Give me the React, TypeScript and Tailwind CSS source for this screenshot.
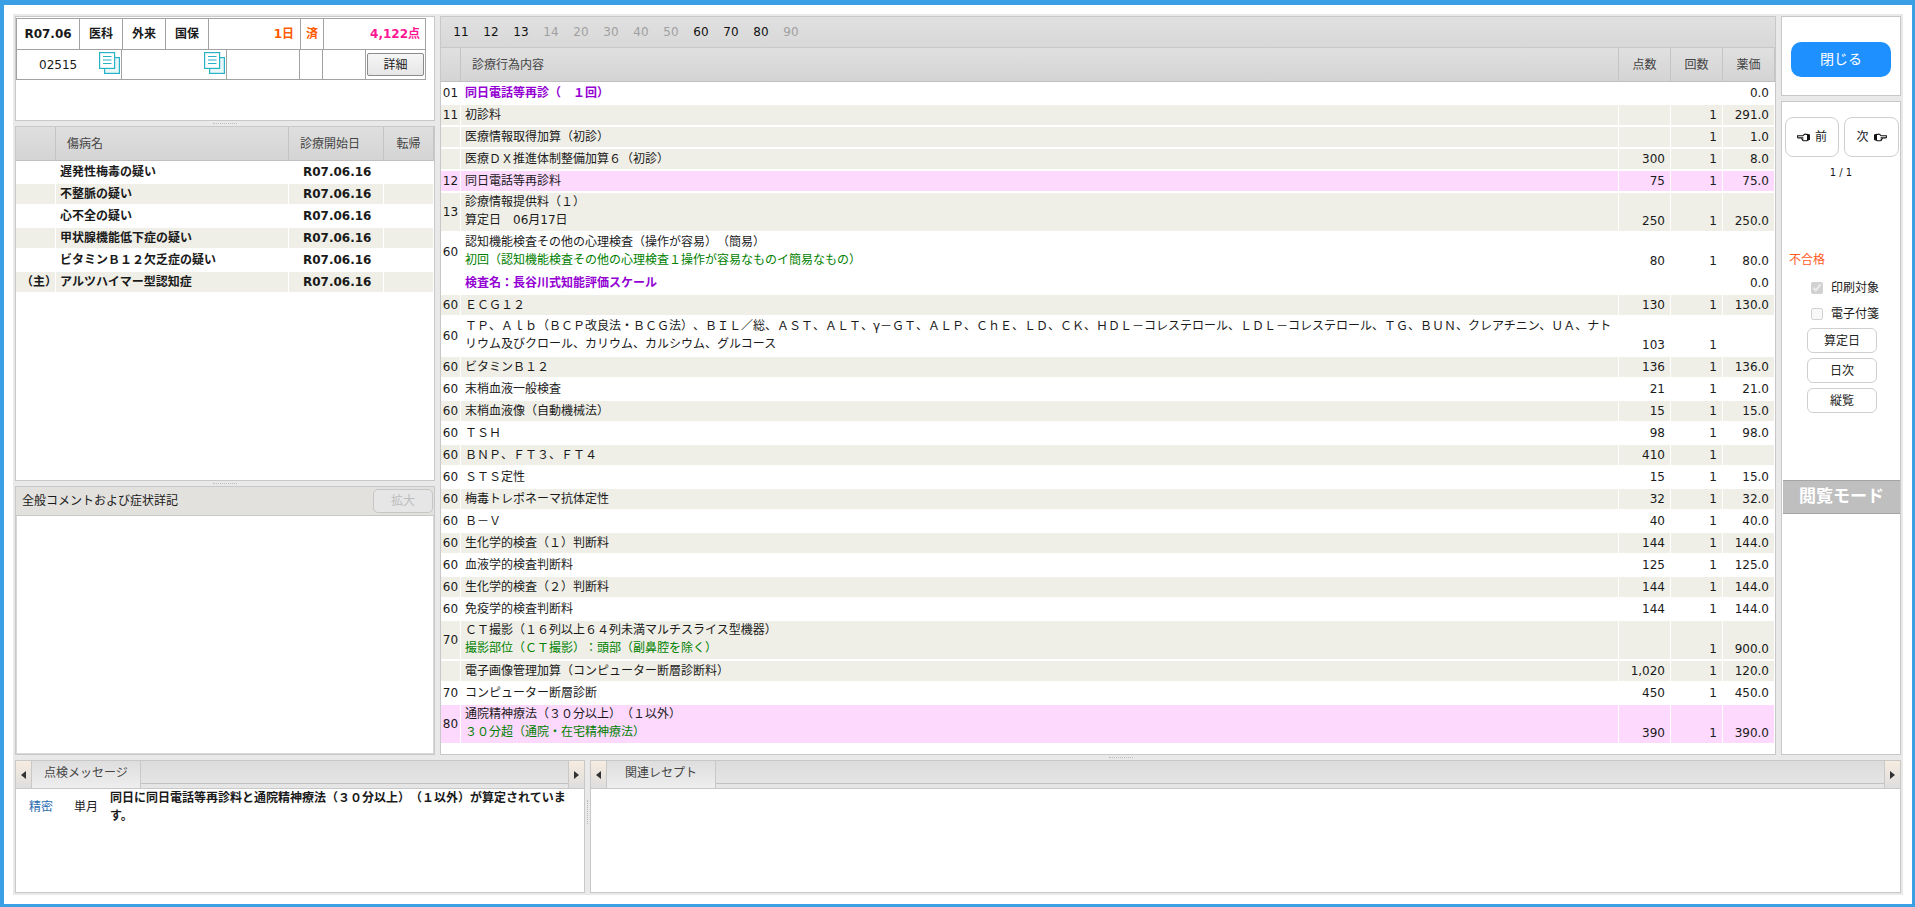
type Tone = 'white' | 'beige' | 'pink';

type Line = { text: string; color?: string };

type Row = {
  code?: string;
  lines: Line[];
  pts?: string;
  times?: string;
  price?: string;
  tone: Tone;
};

const PURPLE = 'text-[#9400d3] font-bold';
const GREEN = 'text-[#008000]';

const tones: Record<Tone, string> = {
  white: 'bg-white',
  beige: 'bg-[#efefe7]',
  pink: 'bg-[#fdd9fe]',
};

const rows: Row[] = [
  { code: '01', lines: [{ text: '同日電話等再診（　１回）', color: PURPLE }], price: '0.0', tone: 'white' },
  { code: '11', lines: [{ text: '初診料' }], times: '1', price: '291.0', tone: 'beige' },
  { lines: [{ text: '医療情報取得加算（初診）' }], times: '1', price: '1.0', tone: 'beige' },
  { lines: [{ text: '医療ＤＸ推進体制整備加算６（初診）' }], pts: '300', times: '1', price: '8.0', tone: 'beige' },
  { code: '12', lines: [{ text: '同日電話等再診料' }], pts: '75', times: '1', price: '75.0', tone: 'pink' },
  { code: '13', lines: [{ text: '診療情報提供料（１）' }, { text: '算定日　06月17日' }], pts: '250', times: '1', price: '250.0', tone: 'beige' },
  {
    code: '60',
    lines: [
      { text: '認知機能検査その他の心理検査（操作が容易）（簡易）' },
      { text: '初回（認知機能検査その他の心理検査１操作が容易なものイ簡易なもの）', color: GREEN },
    ],
    pts: '80',
    times: '1',
    price: '80.0',
    tone: 'white',
  },
  { lines: [{ text: '検査名：長谷川式知能評価スケール', color: PURPLE }], price: '0.0', tone: 'white' },
  { code: '60', lines: [{ text: 'ＥＣＧ１２' }], pts: '130', times: '1', price: '130.0', tone: 'beige' },
  {
    code: '60',
    lines: [
      { text: 'ＴＰ、Ａｌｂ（ＢＣＰ改良法・ＢＣＧ法）、ＢＩＬ／総、ＡＳＴ、ＡＬＴ、γ－ＧＴ、ＡＬＰ、ＣｈＥ、ＬＤ、ＣＫ、ＨＤＬ－コレステロール、ＬＤＬ－コレステロール、ＴＧ、ＢＵＮ、クレアチニン、ＵＡ、ナト' },
      { text: 'リウム及びクロール、カリウム、カルシウム、グルコース' },
    ],
    pts: '103',
    times: '1',
    tone: 'white',
  },
  { code: '60', lines: [{ text: 'ビタミンＢ１２' }], pts: '136', times: '1', price: '136.0', tone: 'beige' },
  { code: '60', lines: [{ text: '末梢血液一般検査' }], pts: '21', times: '1', price: '21.0', tone: 'white' },
  { code: '60', lines: [{ text: '末梢血液像（自動機械法）' }], pts: '15', times: '1', price: '15.0', tone: 'beige' },
  { code: '60', lines: [{ text: 'ＴＳＨ' }], pts: '98', times: '1', price: '98.0', tone: 'white' },
  { code: '60', lines: [{ text: 'ＢＮＰ、ＦＴ３、ＦＴ４' }], pts: '410', times: '1', tone: 'beige' },
  { code: '60', lines: [{ text: 'ＳＴＳ定性' }], pts: '15', times: '1', price: '15.0', tone: 'white' },
  { code: '60', lines: [{ text: '梅毒トレポネーマ抗体定性' }], pts: '32', times: '1', price: '32.0', tone: 'beige' },
  { code: '60', lines: [{ text: 'Ｂ－Ｖ' }], pts: '40', times: '1', price: '40.0', tone: 'white' },
  { code: '60', lines: [{ text: '生化学的検査（１）判断料' }], pts: '144', times: '1', price: '144.0', tone: 'beige' },
  { code: '60', lines: [{ text: '血液学的検査判断料' }], pts: '125', times: '1', price: '125.0', tone: 'white' },
  { code: '60', lines: [{ text: '生化学的検査（２）判断料' }], pts: '144', times: '1', price: '144.0', tone: 'beige' },
  { code: '60', lines: [{ text: '免疫学的検査判断料' }], pts: '144', times: '1', price: '144.0', tone: 'white' },
  {
    code: '70',
    lines: [
      { text: 'ＣＴ撮影（１６列以上６４列未満マルチスライス型機器）' },
      { text: '撮影部位（ＣＴ撮影）：頭部（副鼻腔を除く）', color: GREEN },
    ],
    times: '1',
    price: '900.0',
    tone: 'beige',
  },
  { lines: [{ text: '電子画像管理加算（コンピューター断層診断料）' }], pts: '1,020', times: '1', price: '120.0', tone: 'beige' },
  { code: '70', lines: [{ text: 'コンピューター断層診断' }], pts: '450', times: '1', price: '450.0', tone: 'white' },
  {
    code: '80',
    lines: [
      { text: '通院精神療法（３０分以上）（１以外）' },
      { text: '３０分超（通院・在宅精神療法）', color: GREEN },
    ],
    pts: '390',
    times: '1',
    price: '390.0',
    tone: 'pink',
  },
];

const diseases = [
  { main: '', name: '遅発性梅毒の疑い' },
  { main: '', name: '不整脈の疑い' },
  { main: '', name: '心不全の疑い' },
  { main: '', name: '甲状腺機能低下症の疑い' },
  { main: '', name: 'ビタミンＢ１２欠乏症の疑い' },
  { main: '（主）', name: 'アルツハイマー型認知症' },
];

const categories = [
  { label: '11', on: true },
  { label: '12', on: true },
  { label: '13', on: true },
  { label: '14', on: false },
  { label: '20', on: false },
  { label: '30', on: false },
  { label: '40', on: false },
  { label: '50', on: false },
  { label: '60', on: true },
  { label: '70', on: true },
  { label: '80', on: true },
  { label: '90', on: false },
];

function Splitter() {
  return (
    <div className="flex h-[5px] shrink-0 items-center justify-center">
      <div className="w-[24px] border-t border-dotted border-[#bdbdbd]" />
    </div>
  );
}

function DocIcon() {
  return (
    <svg width="21" height="22" viewBox="0 0 21 22" className="block">
      <rect x="5.6" y="5.6" width="14.8" height="15.8" fill="#e9f7f9" stroke="#27b3c7" strokeWidth="1.2" />
      <rect x="0.6" y="0.6" width="15" height="15.8" fill="#ffffff" stroke="#27b3c7" strokeWidth="1.2" />
      <path d="M4 4.5h8.5M4 8h8.5M4 11.5h8.5" stroke="#27b3c7" strokeWidth="1" fill="none" />
    </svg>
  );
}

// pointing hand, drawn facing left; flip mirrors it for the "next" button
function Hand({ flip }: { flip?: boolean }) {
  return (
    <svg width="13" height="9" viewBox="0 0 13 9" className={flip ? 'block -scale-x-100' : 'block'}>
      <path
        d="M.6 2.7h5.3c1-1.4 2.6-1.8 4-1.3l2.5.6v4.4l-2.5 1.3H6.6c-1 0-1.4-.9-.9-1.4-.9 0-1.2-1-.6-1.4H1.6c-.6 0-1-.2-1-.7z"
        fill="#fff"
        stroke="#111"
        strokeWidth="1.1"
      />
      <path d="M10 1.4l2.8.6v4.4L10 7.6z" fill="#111" />
    </svg>
  );
}

function Arrow({ dir }: { dir: 'left' | 'right' }) {
  return (
    <div className="flex h-full w-[15px] shrink-0 items-center justify-center bg-linear-to-b from-[#f7ece0] to-[#dedede] pt-[1px]">
      <svg width="5" height="8" viewBox="0 0 5 8">
        <path d={dir === 'left' ? 'M5 0L0 4l5 4z' : 'M0 0l5 4-5 4z'} fill="#333" />
      </svg>
    </div>
  );
}

function TabBar({ label }: { label: string }) {
  return (
    <div className="flex h-[28px] shrink-0 border-b border-[#c8c8c8] bg-linear-to-b from-[#dcdcdc] to-[#e6e6e6]">
      <Arrow dir="left" />
      <div className="flex h-full w-[110px] shrink-0 justify-center border-r border-l border-[#c8c8c8] bg-linear-to-b from-[#dedede] to-[#eeeeee] pt-[3px] leading-[18px] text-[#444]">
        {label}
      </div>
      <div className="h-[23px] flex-1 border-b border-[#c2c2c2]" />
      <div className="border-l border-[#c8c8c8]">
        <Arrow dir="right" />
      </div>
    </div>
  );
}

function GridHead({ className, children }: { className?: string; children?: React.ReactNode }) {
  return (
    <div className={`flex h-full items-center border-r border-[#c4c4c4] text-[#444] ${className ?? ''}`}>
      {children}
    </div>
  );
}

function NumCell({ value, tone }: { value?: string; tone: Tone }) {
  return (
    <div className={`flex items-end justify-end pr-[5px] pb-[1px] leading-[18px] ${tones[tone]}`}>{value}</div>
  );
}

function SideButton({ children }: { children: React.ReactNode }) {
  return (
    <button className="mt-[5px] ml-[25px] flex h-[25px] w-[70px] items-center justify-center rounded-[6px] border border-[#cfcfcf] bg-white text-[#222]">
      {children}
    </button>
  );
}

function FeeRow({ row }: { row: Row }) {
  const two = row.lines.length > 1;
  return (
    <div className="grid grid-cols-[19px_1157px_51px_51px_51px] gap-x-px">
      <div className={`flex items-center justify-center pb-[1px] leading-[18px] ${tones[row.tone]}`}>{row.code}</div>
      <div className={`${two ? 'h-[38px]' : 'h-[20px] pt-px'} pl-[4px] leading-[18px] whitespace-nowrap ${tones[row.tone]}`}>
        {row.lines.map((line) => (
          <div key={line.text} className={line.color ?? ''}>
            {line.text}
          </div>
        ))}
      </div>
      <NumCell value={row.pts} tone={row.tone} />
      <NumCell value={row.times} tone={row.tone} />
      <NumCell value={row.price} tone={row.tone} />
    </div>
  );
}

export default function App() {
  return (
    <div className="h-[907px] w-[1915px] overflow-hidden border-t-[5px] border-r-[3px] border-b-[3px] border-l-[4px] border-[#3a9fe4] bg-white pt-[9px] pl-[9px] [font-family:'DejaVu_Sans','Noto_Sans_CJK_JP',sans-serif] text-[12px] text-[#1a1a1a] [text-spacing-trim:space-all]">
      <div className="flex h-[881px] w-[1890px] flex-col bg-[#e9e9e9] pt-[2px] pl-[2px]">
        <div className="flex h-[739px] shrink-0 gap-[5px]">
          {/* left column */}
          <div className="flex w-[420px] shrink-0 flex-col">
            <div className="h-[105px] shrink-0 border border-[#c8c8c8] bg-white pt-px">
              <div className="w-[410px] border-x border-t border-[#a2a2a2]">
                <div className="flex h-[31px] border-b border-[#a2a2a2] font-bold">
                  <div className="flex w-[63px] items-center justify-center border-r border-[#a2a2a2]">R07.06</div>
                  <div className="flex w-[43px] items-center justify-center border-r border-[#a2a2a2]">医科</div>
                  <div className="flex w-[43px] items-center justify-center border-r border-[#a2a2a2]">外来</div>
                  <div className="flex w-[43px] items-center justify-center border-r border-[#a2a2a2]">国保</div>
                  <div className="flex w-[92px] items-center justify-end border-r border-[#a2a2a2] pr-[6px] text-[#ff5a00]">1日</div>
                  <div className="flex w-[23px] items-center justify-center border-r border-[#a2a2a2] text-[#ff5a00]">済</div>
                  <div className="flex flex-1 items-center justify-end pr-[5px] text-[#ff1493]">4,122点</div>
                </div>
                <div className="flex h-[30px] border-b border-[#a2a2a2]">
                  <div className="flex w-[105px] items-center border-r border-[#a2a2a2] pr-px pl-[22px]">
                    <span>02515</span>
                    <span className="-mt-[3px] ml-auto"><DocIcon /></span>
                  </div>
                  <div className="flex w-[105px] items-center justify-end border-r border-[#a2a2a2] pr-px">
                    <span className="-mt-[3px]"><DocIcon /></span>
                  </div>
                  <div className="w-[73px] border-r border-[#a2a2a2]" />
                  <div className="w-[23px] border-r border-[#a2a2a2]" />
                  <div className="w-[43px] border-r border-[#a2a2a2]" />
                  <div className="flex flex-1 items-center justify-center">
                    <button className="h-[23px] w-[57px] rounded-[2px] border border-[#8c8c8c] bg-linear-to-b from-[#f6f6f6] to-[#e6e6e6] text-[#1a1a1a]">
                      詳細
                    </button>
                  </div>
                </div>
              </div>
            </div>
            <Splitter />
            <div className="h-[355px] shrink-0 border border-[#c8c8c8] bg-white">
              <div className="grid h-[34px] grid-cols-[40px_233px_95px_1fr] border-b border-[#c0c0c0] bg-linear-to-b from-[#dfdfdf] to-[#d4d4d4]">
                <GridHead />
                <GridHead className="pl-[11px]">傷病名</GridHead>
                <GridHead className="pl-[11px]">診療開始日</GridHead>
                <GridHead className="justify-center">転帰</GridHead>
              </div>
              <div className="flex flex-col gap-y-[2px] pt-[1px]">
                {diseases.map((d, i) => {
                  const bg = i % 2 === 1 ? 'bg-[#efefe7]' : 'bg-white';
                  return (
                    <div key={d.name} className="grid h-[20px] grid-cols-[39px_232px_94px_49px] gap-x-px font-bold">
                      <div className={`pl-[5px] leading-[20px] whitespace-nowrap ${bg}`}>{d.main}</div>
                      <div className={`pl-[4px] leading-[20px] ${bg}`}>{d.name}</div>
                      <div className={`pl-[14px] leading-[20px] ${bg}`}>R07.06.16</div>
                      <div className={bg} />
                    </div>
                  );
                })}
              </div>
            </div>
            <Splitter />
            <div className="flex min-h-0 flex-1 flex-col border border-[#c8c8c8] bg-white">
              <div className="flex h-[29px] shrink-0 items-center justify-between border-b border-[#c8c8c8] bg-[#e2e1dd] pr-[1px] pl-[6px]">
                <span>全般コメントおよび症状詳記</span>
                <button disabled className="h-[24px] w-[60px] rounded-[5px] border border-[#c6c6c6] bg-[#e6e6e6] text-[#bdbdbd]">
                  拡大
                </button>
              </div>
              <div className="flex-1 border-x border-b border-[#d8d8d8]" />
            </div>
          </div>

          {/* fee table */}
          <div className="flex w-[1336px] shrink-0 flex-col border border-[#c8c8c8] bg-white">
            <div className="flex h-[31px] shrink-0 items-center border-b border-[#c8c8c8] bg-linear-to-b from-[#e0e0e0] to-[#d8d8d8] pl-[5px]">
              {categories.map((c) => (
                <span key={c.label} className={`w-[30px] text-center ${c.on ? 'text-[#111]' : 'text-[#a0a0a0]'}`}>
                  {c.label}
                </span>
              ))}
            </div>
            <div className="grid h-[34px] shrink-0 grid-cols-[20px_1158px_52px_52px_1fr] border-b border-[#c0c0c0] bg-linear-to-b from-[#e0e0e0] to-[#d4d4d4]">
              <GridHead />
              <GridHead className="pl-[11px]">診療行為内容</GridHead>
              <GridHead className="justify-center">点数</GridHead>
              <GridHead className="justify-center">回数</GridHead>
              <GridHead className="justify-center">薬価</GridHead>
            </div>
            <div className="flex flex-col gap-y-[2px] pt-[1px]">
              {rows.map((row, i) => (
                <FeeRow key={i} row={row} />
              ))}
            </div>
          </div>

          {/* side column */}
          <div className="flex w-[120px] shrink-0 flex-col gap-[5px]">
            <div className="flex h-[80px] shrink-0 justify-center border border-[#c8c8c8] bg-white pt-[25px]">
              <button className="h-[35px] w-[100px] rounded-[10px] bg-[#1e90ff] text-[14px] text-white">閉じる</button>
            </div>
            <div className="flex min-h-0 flex-1 flex-col border border-[#c8c8c8] bg-white">
              <div className="mt-[15px] ml-[3px] flex gap-[5px]">
                <button className="flex h-[40px] w-[54px] items-center justify-center gap-[5px] rounded-[8px] border border-[#cfcfcf] bg-white">
                  <Hand />
                  <span>前</span>
                </button>
                <button className="flex h-[40px] w-[55px] items-center justify-center gap-[5px] rounded-[8px] border border-[#cfcfcf] bg-white">
                  <span>次</span>
                  <Hand flip />
                </button>
              </div>
              <div className="mt-[9px] h-[14px] text-center text-[10px] leading-[14px]">1 / 1</div>
              <div className="mt-[71px] ml-[7px] leading-[18px] text-[#ff5a1e]">不合格</div>
              <label className="mt-[10px] ml-[29px] flex h-[18px] items-center gap-[8px]">
                <input type="checkbox" disabled defaultChecked className="m-0 h-[12px] w-[12px]" />
                <span>印刷対象</span>
              </label>
              <label className="mt-[8px] ml-[29px] flex h-[18px] items-center gap-[8px]">
                <input type="checkbox" disabled className="m-0 h-[12px] w-[12px]" />
                <span>電子付箋</span>
              </label>
              <SideButton>算定日</SideButton>
              <SideButton>日次</SideButton>
              <SideButton>縦覧</SideButton>
              <div className="mt-[67px] ml-px flex h-[34px] items-center justify-center border-y border-[#a4a4a4] bg-[#bfbfbf] text-[17px] font-bold text-white">
                閲覧モード
              </div>
            </div>
          </div>
        </div>

        <div className="ml-[438px] w-[1336px]">
          <Splitter />
        </div>

        <div className="flex h-[133px] shrink-0">
          <div className="flex w-[570px] shrink-0 flex-col border border-[#c8c8c8] bg-white">
            <TabBar label="点検メッセージ" />
            <div className="flex items-center pl-[13px]">
              <span className="text-[#2b6cb0]">精密</span>
              <span className="ml-[21px]">単月</span>
              <div className="ml-[12px] w-[460px] leading-[18px] font-bold">
                同日に同日電話等再診料と通院精神療法（３０分以上）（１以外）が算定されています。
              </div>
            </div>
          </div>
          <div className="flex w-[5px] shrink-0 items-center justify-center">
            <div className="-mt-[30px] h-[24px] border-l border-dotted border-[#bdbdbd]" />
          </div>
          <div className="flex w-[1311px] shrink-0 flex-col border border-[#c8c8c8] bg-white">
            <TabBar label="関連レセプト" />
          </div>
        </div>
      </div>
    </div>
  );
}
